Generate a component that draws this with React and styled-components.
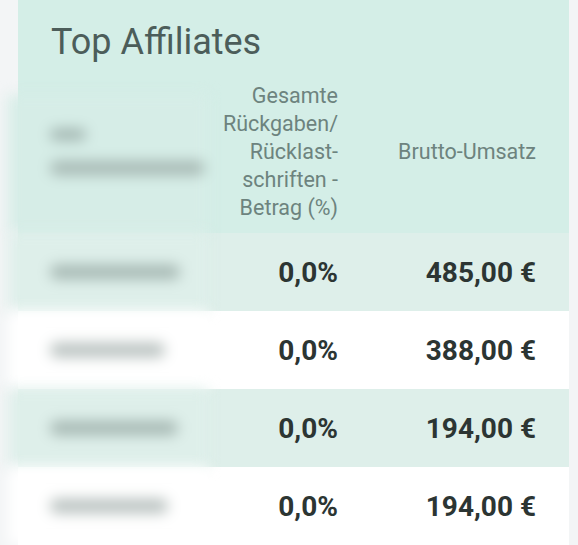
import React from "react";
import styled, { createGlobalStyle } from "styled-components";

const GlobalStyle = createGlobalStyle`
  body {
    margin: 0;
    background: #f3f5f6;
    font-family: Roboto, "Liberation Sans", sans-serif;
  }
`;

const Page = styled.div`
  padding: 0 9px 0 18px;
  height: 545px;
  overflow: hidden;
`;

const Card = styled.div`
  background: #d4eee7;
  padding-top: 20px;
`;

const Title = styled.h2`
  margin: 0;
  padding-left: 33px;
  font-size: 36px;
  line-height: 44px;
  font-weight: 400;
  color: #4c5d5a;
`;

const Row = styled.div`
  display: grid;
  grid-template-columns: 190px 142px 1fr;
  height: ${p => (p.$head ? "153px" : "78px")};
  margin-top: ${p => (p.$head ? "16px" : "0")};
  background: ${p => (p.$head ? "#d4eee7" : p.$alt ? "#deefea" : "#ffffff")};
`;

const NameCell = styled.div`
  display: flex;
  flex-direction: column;
  justify-content: center;
  margin: ${p => (p.$head ? "15px 0 0 -10px" : "0 0 0 -10px")};
  padding: ${p => (p.$head ? "0 0 24px 42px" : "0 0 0 42px")};
  background: ${p => (p.$head ? "#d6ede7" : "inherit")};
  filter: blur(7px);
`;

const Blob = styled.span`
  display: block;
  width: ${p => p.$w}px;
  height: ${p => p.$h || 14}px;
  margin-top: ${p => p.$gap || 0}px;
  border-radius: 7px;
  background: ${p => p.$c || "#a3b3ae"};
`;

const Cell = styled.div`
  display: flex;
  align-items: center;
  justify-content: flex-end;
  text-align: right;
  padding-right: ${p => p.$pr}px;
  padding-bottom: ${p => (p.$head ? "10px" : "0")};
`;

const HeadText = styled.span`
  font-size: 21.5px;
  line-height: 28px;
  color: #6d837e;
`;

const Value = styled.span`
  font-size: 28px;
  font-weight: 700;
  color: #2c3533;
`;

const rows = [
  { pct: "0,0%", total: "485,00 €", w: 130 },
  { pct: "0,0%", total: "388,00 €", w: 115 },
  { pct: "0,0%", total: "194,00 €", w: 128 },
  { pct: "0,0%", total: "194,00 €", w: 118 },
];

export default function App() {
  return (
    <>
      <GlobalStyle />
      <Page>
        <Card>
          <Title>Top Affiliates</Title>
          <Row $head>
            <NameCell $head>
              <Blob $w={36} $h={11} $c="#9db0ab" />
              <Blob $w={155} $h={14} $gap={21} $c="#a6b8b3" />
            </NameCell>
            <Cell $head $pr={12}>
              <HeadText>
                Gesamte
                <br />
                Rückgaben/
                <br />
                Rücklast-
                <br />
                schriften -
                <br />
                Betrag (%)
              </HeadText>
            </Cell>
            <Cell $head $pr={33}>
              <HeadText>Brutto-Umsatz</HeadText>
            </Cell>
          </Row>
          {rows.map((r, i) => (
            <Row key={i} $alt={i % 2 === 0}>
              <NameCell>
                <Blob $w={r.w} $c={i % 2 === 0 ? "#a4b6b1" : "#b6bfbd"} />
              </NameCell>
              <Cell $pr={12}>
                <Value>{r.pct}</Value>
              </Cell>
              <Cell $pr={33}>
                <Value>{r.total}</Value>
              </Cell>
            </Row>
          ))}
        </Card>
      </Page>
    </>
  );
}
